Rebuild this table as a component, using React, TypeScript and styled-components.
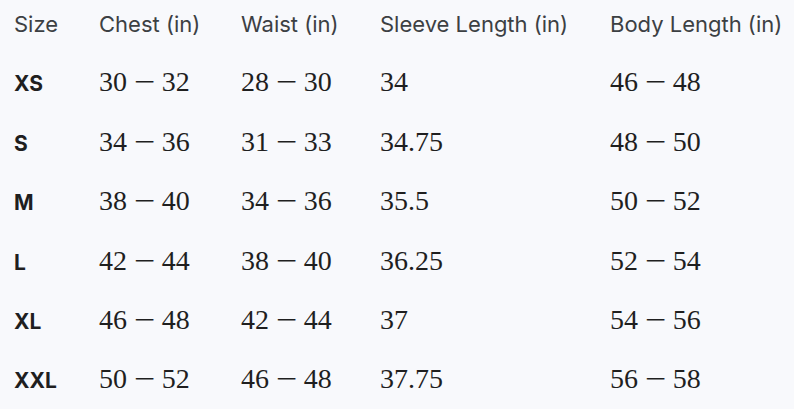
import styled, { createGlobalStyle } from "styled-components";

const GlobalStyle = createGlobalStyle`
  html, body {
    margin: 0;
    padding: 0;
    background: #f8f9fc;
  }
`;

type SizeRow = {
  size: string;
  chest: [number, number];
  waist: [number, number];
  sleeve: string;
  body: [number, number];
};

const rows: SizeRow[] = [
  { size: "XS", chest: [30, 32], waist: [28, 30], sleeve: "34", body: [46, 48] },
  { size: "S", chest: [34, 36], waist: [31, 33], sleeve: "34.75", body: [48, 50] },
  { size: "M", chest: [38, 40], waist: [34, 36], sleeve: "35.5", body: [50, 52] },
  { size: "L", chest: [42, 44], waist: [38, 40], sleeve: "36.25", body: [52, 54] },
  { size: "XL", chest: [46, 48], waist: [42, 44], sleeve: "37", body: [54, 56] },
  { size: "XXL", chest: [50, 52], waist: [46, 48], sleeve: "37.75", body: [56, 58] },
];

const headers = ["Size", "Chest (in)", "Waist (in)", "Sleeve Length (in)", "Body Length (in)"];

const Range = ({ value }: { value: [number, number] }) => (
  <>
    {value[0]}
    <Minus>−</Minus>
    {value[1]}
  </>
);

const App = () => {
  return (
    <>
      <GlobalStyle />
      <Table>
        <HeadRow>
          {headers.map((h) => (
            <HeadCell key={h}>{h}</HeadCell>
          ))}
        </HeadRow>
        {rows.map((r) => (
          <Row key={r.size}>
            <SizeCell>{r.size}</SizeCell>
            <ValueCell>
              <Range value={r.chest} />
            </ValueCell>
            <ValueCell>
              <Range value={r.waist} />
            </ValueCell>
            <ValueCell>{r.sleeve}</ValueCell>
            <ValueCell>
              <Range value={r.body} />
            </ValueCell>
          </Row>
        ))}
      </Table>
    </>
  );
};

const Table = styled.div`
  width: 794px;
  height: 409px;
  box-sizing: border-box;
  padding-left: 14px;
  display: flex;
  flex-direction: column;
  background: #f8f9fc;
`;

const HeadRow = styled.div`
  display: grid;
  grid-template-columns: 85px 142px 139px 230px 1fr;
  align-items: baseline;
  align-content: center;
  padding-bottom: 5px;
  box-sizing: border-box;
  height: 53px;
`;

const Row = styled.div`
  display: grid;
  grid-template-columns: 85px 142px 139px 230px 1fr;
  align-items: baseline;
  align-content: center;
  height: 59.6px;
`;

const HeadCell = styled.div`
  font-family: Inter, "Noto Sans", sans-serif;
  font-size: 22px;
  color: #3c4043;
  white-space: nowrap;
`;

const SizeCell = styled.div`
  font-family: Inter, "Noto Sans", sans-serif;
  font-weight: 700;
  font-size: 21px;
  color: #1f1f1f;
`;

const ValueCell = styled.div`
  font-family: "Liberation Serif", "DejaVu Serif", serif;
  font-size: 28px;
  color: #1f1f1f;
  white-space: nowrap;
`;

const Minus = styled.span`
  display: inline-block;
  margin: 0 0.34em;
  transform: scaleX(1.35);
`;

export default App;
